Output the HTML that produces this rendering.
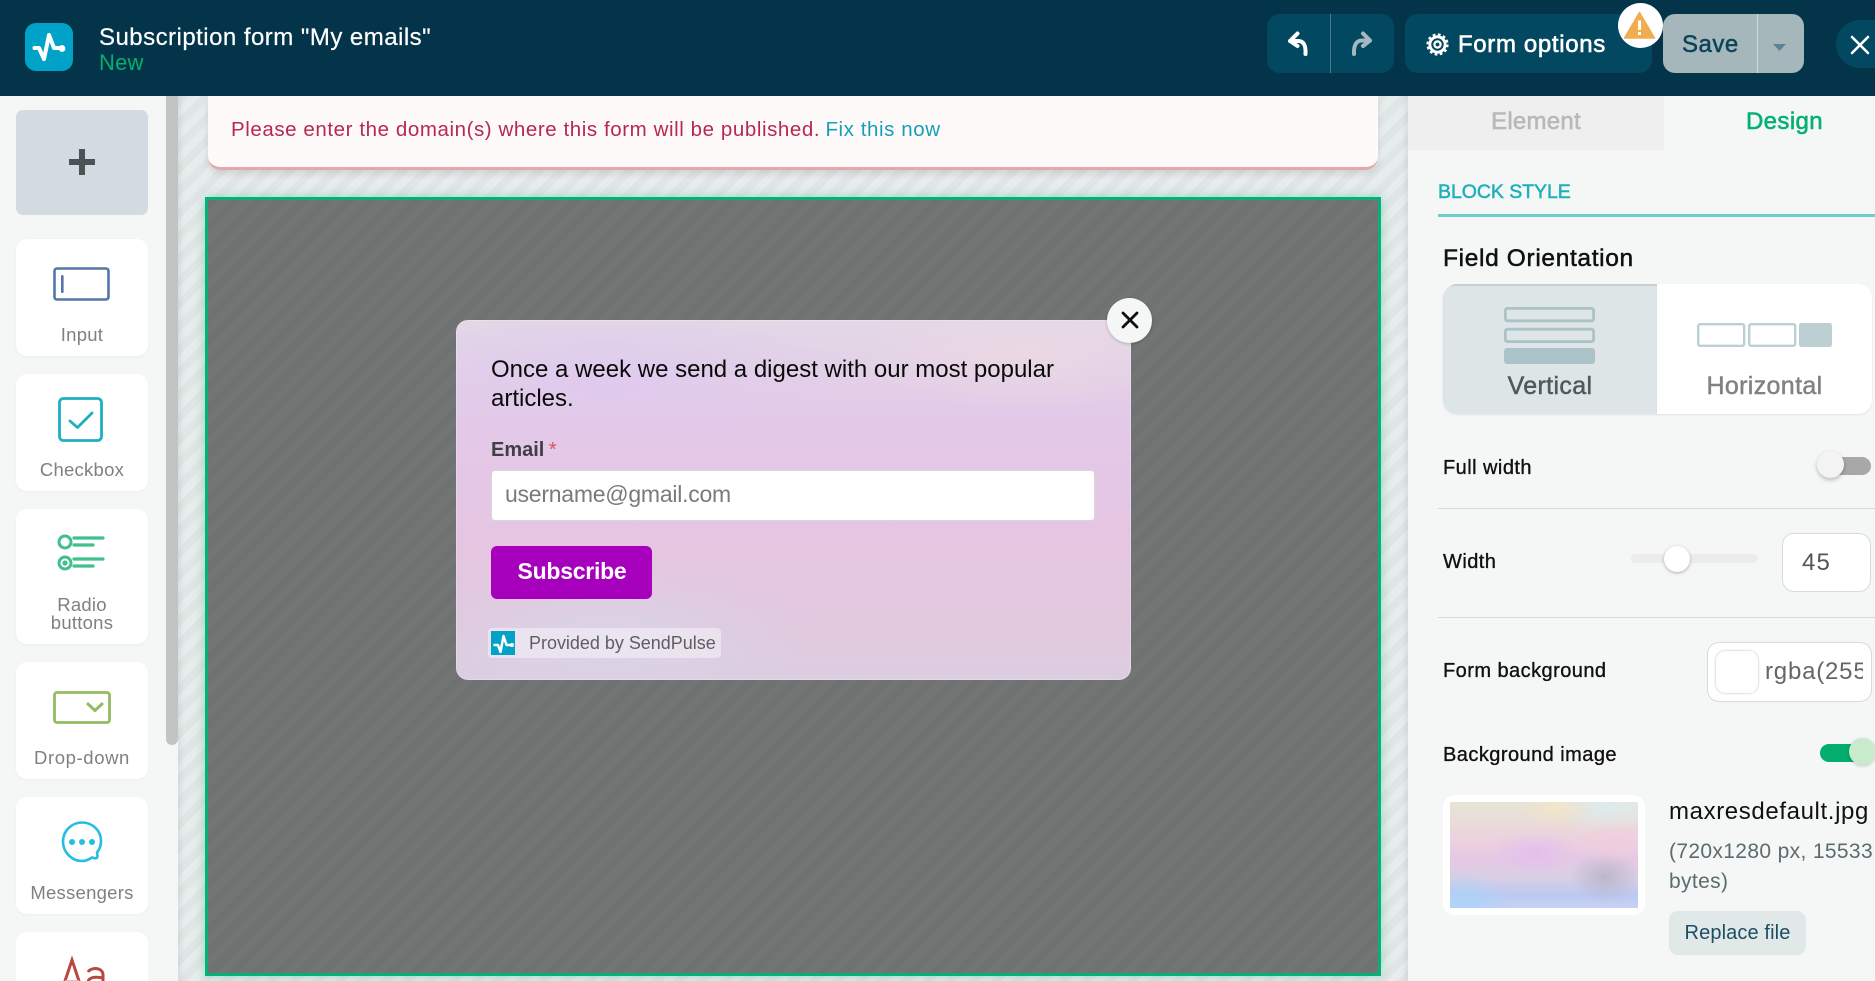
<!DOCTYPE html>
<html><head><meta charset="utf-8"><style>
*{box-sizing:border-box;margin:0;padding:0}
html,body{width:1875px;height:981px;overflow:hidden;background:#f5f7f6;font-family:"Liberation Sans",sans-serif}
.a{position:absolute}
.t{position:absolute;white-space:nowrap;line-height:1}
svg{position:absolute;overflow:visible}
.card{position:absolute;left:16px;width:132px;background:#fff;border-radius:11px;box-shadow:0 1px 3px rgba(0,0,0,.04)}
.lab{position:absolute;left:0;width:132px;text-align:center;color:#7f8181;font-size:18.5px;line-height:18px;letter-spacing:.25px}
.rule{position:absolute;left:1438px;right:0;height:1px;background:#d3dcdc}
.l{position:absolute;left:1443px;font-size:20px;line-height:22px;color:#111;white-space:nowrap;letter-spacing:.45px;-webkit-text-stroke:.35px #111}
</style></head><body>

<div class="a" style="left:0;top:0;width:1875px;height:96px;background:#033449"></div>
<svg style="left:25px;top:23px" width="48" height="48" viewBox="0 0 48 48"><rect width="48" height="48" rx="11" fill="#00a3c7"/><path d="M9.5 25H14L19 36L24 12L29 25H36" fill="none" stroke="#fff" stroke-width="4" stroke-linejoin="round" stroke-linecap="round"/><circle cx="37" cy="25.5" r="3.4" fill="#fff"/></svg>
<div class="t" style="left:99px;top:26px;font-size:24px;color:#fff;letter-spacing:.47px;-webkit-text-stroke:.2px #fff">Subscription form "My emails"</div>
<div class="t" style="left:99px;top:52px;font-size:22px;color:#07ad6e;letter-spacing:.2px">New</div>

<div class="a" style="left:1267px;top:14px;width:127px;height:59px;background:#034861;border-radius:13px"></div>
<div class="a" style="left:1330px;top:14px;width:1px;height:59px;background:#4e7a8c"></div>
<svg style="left:1288px;top:30px" width="24" height="28" viewBox="0 0 24 28"><path d="M2 11L9.5 3.5M2 11L9.5 16M2 11H10C15.5 11 18 15 17.5 24" fill="none" stroke="#fff" stroke-width="4" stroke-linecap="round" stroke-linejoin="round"/></svg>
<svg style="left:1349px;top:30px" width="24" height="28" viewBox="0 0 24 28"><path d="M21 10.5L14 3.5M21 10.5L14 16M21 10.5H13C7.5 10.5 4.5 15 5 24" fill="none" stroke="#a3b8c0" stroke-width="4" stroke-linecap="round" stroke-linejoin="round"/></svg>

<div class="a" style="left:1405px;top:14px;width:247px;height:59px;background:#034861;border-radius:13px"></div>
<svg style="left:1426px;top:33px" width="23" height="23" viewBox="0 0 24 24"><circle cx="12" cy="12" r="8" fill="none" stroke="#fff" stroke-width="3"/><circle cx="12" cy="12" r="10.4" fill="none" stroke="#fff" stroke-width="2.4" stroke-dasharray="2.9 2.55"/><circle cx="12" cy="12" r="3.2" fill="none" stroke="#fff" stroke-width="2.4"/></svg>
<div class="t" style="left:1458px;top:33px;font-size:24px;color:#fff;letter-spacing:.65px;-webkit-text-stroke:.6px #fff">Form options</div>

<div class="a" style="left:1663px;top:14px;width:141px;height:59px;background:#a6b7bc;border-radius:12px"></div>
<div class="a" style="left:1757px;top:14px;width:1px;height:59px;background:#d2dcdf"></div>
<div class="t" style="left:1682px;top:33px;font-size:24px;color:#0b4459;letter-spacing:.5px;-webkit-text-stroke:.5px #0b4459">Save</div>
<svg style="left:1773px;top:43px" width="13" height="9"><path d="M0 1H13L6.5 8Z" fill="#5a8393"/></svg>

<div class="a" style="left:1618px;top:3px;width:45px;height:45px;border-radius:50%;background:#fff"></div>
<svg style="left:1623px;top:11px" width="33" height="28" viewBox="0 0 33 28"><path d="M16.5 1.5L31.5 27H1.5Z" fill="#f0ad50" stroke="#f0ad50" stroke-width="1.5" stroke-linejoin="round"/><rect x="15" y="9.5" width="3" height="9.5" fill="#fff"/><rect x="15" y="21" width="3" height="3" fill="#fff"/></svg>

<div class="a" style="left:1836px;top:20px;width:39px;height:48px;border-radius:24px 0 0 24px;background:#034861"></div>
<svg style="left:1851px;top:36px" width="18" height="18"><path d="M1 1L17 17M17 1L1 17" stroke="#fff" stroke-width="2.6" stroke-linecap="round"/></svg>

<!-- sidebar -->
<div class="a" style="left:166px;top:96px;width:12px;height:649px;background:#c2c4c4;border-radius:0 0 6px 6px"></div>
<div class="a" style="left:16px;top:110px;width:132px;height:105px;background:#d3dae1;border-radius:7px"></div>
<svg style="left:69px;top:149px" width="26" height="26"><path d="M10 0h6v10h10v6H16v10h-6V16H0v-6h10z" fill="#4a5454"/></svg>

<div class="card" style="top:239px;height:117px"><div class="lab" style="top:87px">Input</div>
<svg style="left:37px;top:28px" width="57" height="34"><rect x="1.5" y="1.5" width="54" height="31" rx="2.5" fill="none" stroke="#5276a8" stroke-width="2.6"/><rect x="8" y="8" width="2.6" height="18" rx="1.3" fill="#5276a8"/></svg></div>
<div class="card" style="top:374px;height:117px"><div class="lab" style="top:87px">Checkbox</div>
<svg style="left:42px;top:23px" width="46" height="46"><rect x="1.5" y="1.5" width="42" height="42" rx="4" fill="none" stroke="#20aec1" stroke-width="2.8"/><path d="M12 24L19.5 30.5L34 16" fill="none" stroke="#20aec1" stroke-width="2.8" stroke-linecap="round" stroke-linejoin="round"/></svg></div>
<div class="card" style="top:509px;height:135px"><div class="lab" style="top:87px;line-height:18px">Radio<br>buttons</div>
<svg style="left:41px;top:25px" width="50" height="38"><circle cx="8" cy="8" r="6" fill="none" stroke="#3fc08d" stroke-width="3"/><circle cx="8" cy="29" r="6" fill="none" stroke="#3fc08d" stroke-width="3"/><circle cx="8" cy="29" r="2.6" fill="#3fc08d"/><path d="M17 4H46M17 11H36M17 25H46M17 32H36" stroke="#3fc08d" stroke-width="3.2" stroke-linecap="round"/></svg></div>
<div class="card" style="top:662px;height:117px"><div class="lab" style="top:87px;letter-spacing:.6px">Drop-down</div>
<svg style="left:37px;top:29px" width="58" height="34"><rect x="1.5" y="1.5" width="55" height="30" rx="2.5" fill="none" stroke="#93bb62" stroke-width="2.8"/><path d="M35 13L42 19.5L49 13" fill="none" stroke="#93bb62" stroke-width="3" stroke-linecap="round" stroke-linejoin="round"/></svg></div>
<div class="card" style="top:797px;height:117px"><div class="lab" style="top:87px">Messengers</div>
<svg style="left:45px;top:24px" width="42" height="42"><path d="M21 1.5C31.5 1.5 40 9.5 40 20C40 24.5 38.5 28.5 36 31.5L36.5 35C36.5 37 35 37.5 33.5 37.2L31 36.5C28 38.5 24.8 40 21 40C10.5 40 2 31 2 20.5C2 10 10.5 1.5 21 1.5Z" fill="none" stroke="#25bde0" stroke-width="2.6" stroke-linejoin="round"/><circle cx="11" cy="21" r="3" fill="#25bde0"/><circle cx="21" cy="21" r="3" fill="#25bde0"/><circle cx="31" cy="21" r="3" fill="#25bde0"/></svg></div>
<div class="a" style="left:16px;top:932px;width:132px;height:49px;background:#fff;border-radius:11px 11px 0 0;overflow:hidden">
<svg style="left:43px;top:26px" width="48" height="30"><path d="M3 32L13 2L23 32" fill="none" stroke="#b8493f" stroke-width="3"/><path d="M6 23H20" stroke="#e7b9b4" stroke-width="2"/><path d="M29 14C32 9 44 9 44 17V30M44 20C34 18 29 20 29 25C29 30 40 30 44 25" fill="none" stroke="#b8493f" stroke-width="3"/></svg></div>

<!-- canvas -->
<div class="a" style="left:178px;top:96px;width:1230px;height:885px;background:repeating-linear-gradient(135deg,#dfe6e5 0 8px,#e7ecec 8px 16px);box-shadow:inset 6px 0 6px -4px rgba(0,0,0,.08),inset -6px 0 6px -4px rgba(0,0,0,.08)"></div>
<div class="a" style="left:208px;top:96px;width:1170px;height:74px;background:#fffafa;border-bottom:3px solid #e4a6af;border-radius:0 0 13px 13px;box-shadow:0 4px 7px rgba(0,0,0,.1)"></div>
<div class="t" style="left:231px;top:120px;font-size:20.5px;color:#b5294e;letter-spacing:.58px">Please enter the domain(s) where this form will be published. <span style="color:#14a0b8;margin-left:-1px">Fix this now</span></div>

<div class="a" style="left:205px;top:197px;width:1176px;height:779px;border:3px solid #06b077;background:repeating-linear-gradient(135deg,#6f7272 0 8px,#737575 8px 16px);box-shadow:0 0 10px rgba(6,176,119,.35)"></div>

<!-- form -->
<div class="a" style="left:456px;top:320px;width:675px;height:360px;border-radius:12px;overflow:hidden;background:linear-gradient(180deg,#e3d8e6 0%,#e3c8e8 30%,#e5c6e2 60%,#e1c8dd 85%,#dccde0 100%)">
<div class="a" style="left:-100px;top:-10px;width:500px;height:130px;background:radial-gradient(closest-side,rgba(222,200,240,.7),rgba(222,200,240,0))"></div>
<div class="a" style="left:400px;top:-30px;width:340px;height:120px;background:radial-gradient(closest-side,rgba(235,216,228,.9),rgba(235,216,228,0))"></div>
<div class="a" style="left:-60px;top:240px;width:420px;height:160px;background:radial-gradient(closest-side,rgba(218,212,232,.95),rgba(218,212,232,0))"></div>
<div class="a" style="left:0;top:0;width:675px;height:360px;border:1px solid rgba(255,255,255,.22);border-radius:12px"></div>
</div>
<div class="t" style="left:491px;top:356px;font-size:24px;line-height:28.8px;color:#0a0a0a;white-space:normal;width:590px">Once a week we send a digest with our most popular articles.</div>
<div class="t" style="left:491px;top:440px;font-size:20px;color:#3f3f46;font-weight:bold">Email <span style="color:#e0505f;font-weight:normal;margin-left:-1px">*</span></div>
<div class="a" style="left:491px;top:470px;width:604px;height:51px;background:#fff;border-radius:4px;border:1px solid rgba(190,190,190,.6)"></div>
<div class="t" style="left:505px;top:483px;font-size:23px;color:#7a7a7a;letter-spacing:-.25px">username@gmail.com</div>
<div class="a" style="left:491px;top:546px;width:161px;height:53px;background:#a600bd;border-radius:6px"></div>
<div class="t" style="left:517.5px;top:560px;font-size:23px;font-weight:bold;color:#fff;letter-spacing:-.25px">Subscribe</div>
<div class="a" style="left:488px;top:628px;width:233px;height:30px;background:rgba(255,255,255,.42);border-radius:4px"></div>
<svg style="left:491px;top:631px" width="24" height="24" viewBox="0 0 48 48"><rect width="48" height="48" fill="#00a3c7"/><path d="M5 28H14L19 42L25 10L31 28H42" fill="none" stroke="#fff" stroke-width="5" stroke-linejoin="round"/><circle cx="42" cy="28" r="4" fill="#fff"/></svg>
<div class="t" style="left:529px;top:634px;font-size:18px;color:#5e5e60;letter-spacing:-.02px">Provided by SendPulse</div>
<div class="a" style="left:1107px;top:298px;width:45px;height:45px;border-radius:50%;background:#f5f6f6;box-shadow:0 1px 3px rgba(0,0,0,.2)"></div>
<svg style="left:1122px;top:312px" width="16" height="16"><path d="M1 1L15 15M15 1L1 15" stroke="#101010" stroke-width="2.8" stroke-linecap="round"/></svg>

<!-- right panel -->
<div class="a" style="left:1408px;top:96px;width:467px;height:885px;background:#f5f7f6"></div>
<div class="a" style="left:1408px;top:96px;width:256px;height:54px;background:#efefef"></div>
<div class="t" style="left:1408px;width:256px;text-align:center;top:110px;font-size:24px;color:#b8b8b8;letter-spacing:.25px;-webkit-text-stroke:.6px #b8b8b8">Element</div>
<div class="t" style="left:1664px;width:241px;text-align:center;top:110px;font-size:24px;color:#04b173;letter-spacing:.4px;-webkit-text-stroke:.6px #04b173">Design</div>
<div class="t" style="left:1438px;top:183px;font-size:19.5px;color:#1db0ba;letter-spacing:-.05px;-webkit-text-stroke:.5px #1db0ba">BLOCK STYLE</div>
<div class="a" style="left:1438px;top:214px;right:0;height:3px;background:#70cccd"></div>

<div class="t" style="left:1443px;top:247px;font-size:24.5px;color:#111;letter-spacing:.65px;-webkit-text-stroke:.5px #111">Field Orientation</div>
<div class="a" style="left:1443px;top:284px;width:429px;height:130px;background:#fff;border-radius:14px;overflow:hidden;box-shadow:0 1px 2px rgba(0,0,0,.08)"><div class="a" style="left:0;top:0;width:214px;height:130px;background:#dde5e7;box-shadow:inset 0 2px 1px rgba(150,170,175,.35)"></div></div>
<svg style="left:1504px;top:307px" width="92" height="58"><rect x="1.4" y="1.4" width="88.2" height="12.4" rx="2" fill="none" stroke="#abc3c8" stroke-width="2.8"/><rect x="1.4" y="22.2" width="88.2" height="12.4" rx="2" fill="none" stroke="#abc3c8" stroke-width="2.8"/><rect y="41" width="91" height="16" rx="3" fill="#abc3c8"/></svg>
<div class="t" style="left:1443px;width:214px;text-align:center;top:374px;font-size:25px;color:#4d5a5b;letter-spacing:.35px;-webkit-text-stroke:.5px #4d5a5b">Vertical</div>
<svg style="left:1697px;top:323px" width="136" height="24"><rect x="1.2" y="1.2" width="46" height="21.6" rx="2" fill="none" stroke="#bcd0d4" stroke-width="2.4"/><rect x="52.2" y="1.2" width="46" height="21.6" rx="2" fill="none" stroke="#bcd0d4" stroke-width="2.4"/><rect x="102" y="0" width="33" height="24" rx="2.5" fill="#bcd0d4"/></svg>
<div class="t" style="left:1657px;width:215px;text-align:center;top:374px;font-size:25px;color:#7f8383;letter-spacing:.35px;-webkit-text-stroke:.5px #7f8383">Horizontal</div>

<div class="l" style="top:457px">Full width</div>
<div class="a" style="left:1825px;top:457px;width:46px;height:18px;background:#a8a8a8;border-radius:9px"></div>
<div class="a" style="left:1817px;top:451px;width:27px;height:27px;border-radius:50%;background:#f3f3f3;box-shadow:0 2px 4px rgba(0,0,0,.25)"></div>
<div class="rule" style="top:508px"></div>

<div class="l" style="top:551px">Width</div>
<div class="a" style="left:1631px;top:554px;width:127px;height:9px;background:#ececec;border-radius:5px"></div>
<div class="a" style="left:1664px;top:546px;width:26px;height:26px;border-radius:50%;background:#fff;box-shadow:0 1px 3px rgba(0,0,0,.3)"></div>
<div class="a" style="left:1782px;top:533px;width:89px;height:59px;background:#fff;border:1px solid #d5dcdc;border-radius:12px"></div>
<div class="t" style="left:1802px;top:551px;font-size:24px;color:#555;letter-spacing:1.2px">45</div>
<div class="rule" style="top:617px"></div>

<div class="l" style="top:660px">Form background</div>
<div class="a" style="left:1707px;top:642px;width:165px;height:60px;background:#fff;border:1px solid #d5dcdc;border-radius:12px"></div>
<div class="a" style="left:1716px;top:651px;width:42px;height:42px;background:#fff;border-radius:9px;box-shadow:0 0 2px rgba(0,0,0,.3)"></div>
<div class="a" style="left:1765px;top:659px;width:98px;height:30px;overflow:hidden;font-size:24px;line-height:26px;color:#666;white-space:nowrap;letter-spacing:.8px">rgba(255</div>

<div class="l" style="top:744px">Background image</div>
<div class="a" style="left:1820px;top:744px;width:44px;height:18px;background:#02ad6d;border-radius:9px"></div>
<div class="a" style="left:1849px;top:738px;width:27px;height:27px;border-radius:50%;background:#c8ebcc;box-shadow:0 1px 3px rgba(0,0,0,.2)"></div>

<div class="a" style="left:1443px;top:795px;width:202px;height:120px;background:#fff;border-radius:12px"></div>
<div class="a" style="left:1450px;top:802px;width:188px;height:106px;overflow:hidden;background:linear-gradient(180deg,#e6e4d6 0%,#eadcd8 18%,#ecd0df 38%,#e4c8e4 55%,#d8cfe4 72%,#bcc8f0 88%,#c6d2f4 100%)">
<div class="a" style="left:100px;top:-20px;width:120px;height:50px;background:radial-gradient(closest-side,rgba(222,236,238,.95),rgba(222,236,238,0))"></div>
<div class="a" style="left:70px;top:-14px;width:70px;height:40px;background:radial-gradient(closest-side,rgba(243,230,200,.9),rgba(243,230,200,0))"></div>
<div class="a" style="left:40px;top:30px;width:90px;height:40px;background:radial-gradient(closest-side,rgba(226,190,238,.9),rgba(226,190,238,0))"></div>
<div class="a" style="left:120px;top:50px;width:70px;height:50px;background:radial-gradient(closest-side,rgba(180,178,198,.8),rgba(180,178,198,0))"></div>
<div class="a" style="left:-30px;top:70px;width:90px;height:60px;background:radial-gradient(closest-side,rgba(172,212,248,.95),rgba(172,212,248,0))"></div>
<div class="a" style="left:120px;top:20px;width:90px;height:40px;background:radial-gradient(closest-side,rgba(240,205,222,.9),rgba(240,205,222,0))"></div>
</div>
<div class="t" style="left:1669px;top:800px;font-size:24px;color:#111;letter-spacing:.62px">maxresdefault.jpg</div>
<div class="a" style="left:1669px;top:837px;width:206px;font-size:21px;line-height:30px;color:#5c6b6e;letter-spacing:.35px">(720x1280 px, 15533<br>bytes)</div>
<div class="a" style="left:1669px;top:911px;width:137px;height:44px;background:#e1e8e8;border-radius:9px"></div>
<div class="t" style="left:1669px;width:137px;text-align:center;top:923px;font-size:20px;color:#1c4e63;letter-spacing:.12px">Replace file</div>

</body></html>
